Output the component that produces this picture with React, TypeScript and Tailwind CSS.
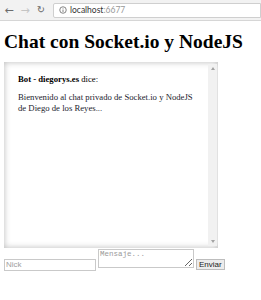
export default function App() {
  return (
    <div className="w-[261px] h-[300px] bg-white overflow-hidden">
      {/* browser toolbar */}
      <div className="h-[21px] bg-[#f2f2f2] border-b border-[#d6d6d6] flex items-center pl-[3px] gap-[4px]">
        <span className="w-[12px] text-center text-[11px] leading-none text-[#6b6b6b] font-['DejaVu_Sans',sans-serif]">←</span>
        <span className="w-[12px] text-center text-[11px] leading-none text-[#c4c4c4] font-['DejaVu_Sans',sans-serif]">→</span>
        <span className="w-[12px] text-center text-[10px] leading-none text-[#6b6b6b] font-['DejaVu_Sans',sans-serif]">↻</span>
        <div className="ml-[2px] flex-1 h-[15px] bg-white border border-[#cfcfcf] rounded-l-[2px] flex items-center pl-[5px] gap-[3px] font-['Lato',sans-serif] text-[8.5px]">
          <svg width="8" height="8" viewBox="0 0 16 16" fill="none" stroke="#666" strokeWidth="1.6">
            <circle cx="8" cy="8" r="6.5" />
            <line x1="8" y1="7" x2="8" y2="12" />
            <line x1="8" y1="4.2" x2="8" y2="5.4" />
          </svg>
          <span className="text-[#333]">localhost<span className="text-[#999]">:6677</span></span>
        </div>
      </div>

      {/* page */}
      <div className="px-[4px] font-['Liberation_Serif',serif] text-black">
        <h1 className="mt-[9px] mb-[8px] text-[19.5px] leading-[24px] font-bold whitespace-nowrap">Chat con Socket.io y NodeJS</h1>

        <div className="w-[214px] h-[186px] flex bg-white shadow-[inset_0_0_6px_rgba(0,0,0,0.28)]">
          <div className="flex-1 min-w-0 overflow-hidden pl-[14px] pr-[2px] pt-[12px] whitespace-nowrap text-[8.7px] leading-[11px]">
            <p><b>Bot - diegorys.es</b> dice:</p>
            <p className="mt-[7px] text-[#23232e]">Bienvenido al chat privado de Socket.io y NodeJS<br />de Diego de los Reyes...</p>
          </div>
          <div className="w-[9px] shrink-0 my-[2px] mr-[1px] bg-[#f1f1f1] flex flex-col justify-between items-center py-[3px]">
            <span className="w-0 h-0 border-x-[2px] border-x-transparent border-b-[3px] border-b-[#a3a3a3]" />
            <span className="w-0 h-0 border-x-[2px] border-x-transparent border-t-[3px] border-t-[#a3a3a3]" />
          </div>
        </div>

        <div className="mt-[1px] flex items-end gap-[2px]">
          <input
            placeholder="Nick"
            className="w-[92px] h-[12px] border border-[#c9c9c9] px-[1px] text-[8px] font-['Liberation_Sans',sans-serif] placeholder:text-[#a0a0a0] outline-none"
          />
          <textarea
            placeholder="Mensaje..."
            className="w-[96px] h-[19px] mb-[3px] border border-[#c9c9c9] px-[1px] py-0 text-[7.5px] leading-[9px] font-['Liberation_Mono',monospace] placeholder:text-[#9a9a9a] resize-y outline-none"
          />
          <button className="h-[11px] px-[2px] mb-[1px] border border-[#bdbdbd] bg-[#ececec] text-[8px] leading-none font-['Liberation_Sans',sans-serif] text-[#222]">Enviar</button>
        </div>
      </div>
    </div>
  )
}
